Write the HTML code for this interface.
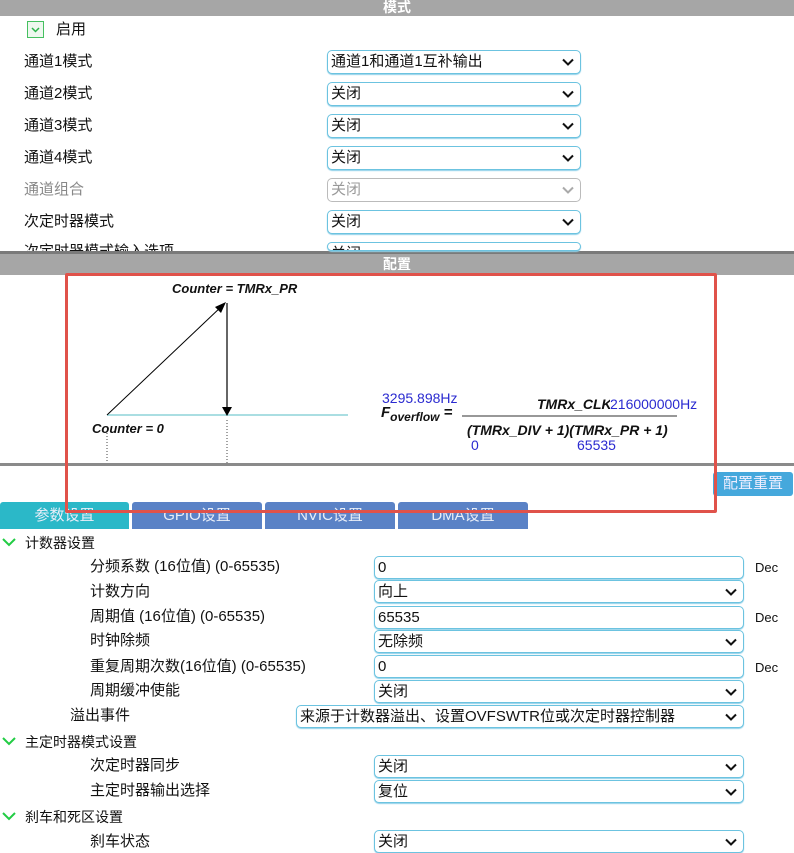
<!DOCTYPE html>
<html><head><meta charset="utf-8"><style>
*{box-sizing:border-box;margin:0;padding:0}
body{width:794px;height:850px;overflow:hidden;background:#fff;position:relative;font-family:"Liberation Sans","Noto Sans CJK SC",sans-serif;color:#111}
.a{position:absolute;white-space:nowrap}
.lab{font-size:15px;line-height:20px}
.sel{position:absolute;border:1px solid #6cc3e0;border-radius:5px;background:#fff;font-size:15px;line-height:22px;padding-left:3px;white-space:nowrap;overflow:hidden;box-shadow:0 1px 1px #8fd0e8}
.sel svg{position:absolute;right:6px;top:7px}
.hdr{position:absolute;left:0;width:794px;background:#a6a6a6;color:#fff;text-align:center;font-size:14px;font-weight:bold}
.tab{position:absolute;top:502px;height:27px;border-radius:3px 3px 0 0;color:#e8eef8;font-size:15px;text-align:center;line-height:27px;background:#5a82c6}
.sec{font-size:14px;line-height:18px}
.chev{position:absolute;left:2px}
.dec{font-size:13px}
.blue{color:#2a2ad0;font-size:13px}
.bi{font-weight:bold;font-style:italic;font-size:13px}
</style></head><body>
<div class="hdr" style="top:0;height:16px;line-height:14px">模式</div>
<div class="a" style="left:27px;top:21px;width:17px;height:17px;border:1px solid #45c060;background:#eef8ef"><svg width="15" height="15" style="position:absolute;left:0;top:0"><path d="M4 6 L7.5 9.5 L11 6" fill="none" stroke="#2bb34a" stroke-width="1.5"/></svg></div>
<div class="a lab" style="left:56px;top:20px">启用</div>

<div class="a lab" style="left:24px;top:52px">通道1模式</div>
<div class="a lab" style="left:24px;top:84px">通道2模式</div>
<div class="a lab" style="left:24px;top:116px">通道3模式</div>
<div class="a lab" style="left:24px;top:148px">通道4模式</div>
<div class="a lab" style="left:24px;top:180px;color:#888">通道组合</div>
<div class="a lab" style="left:24px;top:212px">次定时器模式</div>
<div class="a lab" style="left:24px;top:242px;height:9px;overflow:hidden">次定时器模式输入选项</div>

<div class="a" style="left:0;top:251px;width:794px;height:3px;background:#7a7a7a"></div>
<div class="hdr" style="top:254px;height:21px;line-height:21px">配置</div>

<svg class="a" style="left:0;top:275px" width="794" height="190">
<line x1="107" y1="140" x2="348" y2="140" stroke="#8ed4d8" stroke-width="1.5"/>
<line x1="107" y1="140" x2="222" y2="31" stroke="#000" stroke-width="1"/>
<polygon points="226,27 215,32 221,38" fill="#000"/>
<line x1="227" y1="28" x2="227" y2="134" stroke="#333" stroke-width="1.5"/>
<polygon points="227,141 222,132 232,132" fill="#000"/>
<line x1="107" y1="158" x2="107" y2="190" stroke="#444" stroke-dasharray="1,2"/>
<line x1="227" y1="145" x2="227" y2="190" stroke="#444" stroke-dasharray="1,2"/>
<line x1="462" y1="141" x2="677" y2="141" stroke="#777" stroke-width="1.5"/>
</svg>
<div class="a bi" style="left:172px;top:281px">Counter = TMRx_PR</div>
<div class="a bi" style="left:92px;top:421px">Counter = 0</div>
<div class="a blue" style="left:382px;top:390px;font-size:14px">3295.898Hz</div>
<div class="a bi" style="left:381px;top:404px;font-size:15px">F<sub style="font-size:12px">overflow</sub> =</div>
<div class="a bi" style="left:537px;top:396px;font-size:14px">TMRx_CLK</div>
<div class="a blue" style="left:610px;top:396px;background:#fff;font-size:14px">216000000Hz</div>
<div class="a bi" style="left:467px;top:422px;font-size:14px">(TMRx_DIV + 1)(TMRx_PR + 1)</div>
<div class="a blue" style="left:471px;top:437px;font-size:14px">0</div>
<div class="a blue" style="left:577px;top:437px;font-size:14px">65535</div>

<div class="a" style="left:0;top:463px;width:794px;height:3px;background:#8a8a8a"></div>

<div class="a" style="left:713px;top:472px;width:80px;height:24px;background:#45a8dc;color:#eef;border-radius:3px;font-size:15px;line-height:24px;text-align:center">配置重置</div>

<div class="tab" style="left:0;width:129px;background:#2bb8c8">参数设置</div>
<div class="tab" style="left:132px;width:130px">GPIO设置</div>
<div class="tab" style="left:265px;width:130px">NVIC设置</div>
<div class="tab" style="left:398px;width:130px">DMA设置</div>

<div class="a" style="left:65px;top:273px;width:652px;height:240px;border:3px solid #e0524a;border-radius:2px"></div>

<svg class="chev" style="top:537px" width="16" height="12"><path d="M1 2 L7 8 L13 2" fill="none" stroke="#22cc44" stroke-width="2"/></svg>
<div class="a sec" style="left:25px;top:534px">计数器设置</div>
<svg class="chev" style="top:736px" width="16" height="12"><path d="M1 2 L7 8 L13 2" fill="none" stroke="#22cc44" stroke-width="2"/></svg>
<div class="a sec" style="left:25px;top:733px">主定时器模式设置</div>
<svg class="chev" style="top:811px" width="16" height="12"><path d="M1 2 L7 8 L13 2" fill="none" stroke="#22cc44" stroke-width="2"/></svg>
<div class="a sec" style="left:25px;top:808px">刹车和死区设置</div>

<div class="a lab" style="left:90px;top:557px">分频系数 (16位值) (0-65535)</div>
<div class="a lab" style="left:90px;top:582px">计数方向</div>
<div class="a lab" style="left:90px;top:607px">周期值 (16位值) (0-65535)</div>
<div class="a lab" style="left:90px;top:631px">时钟除频</div>
<div class="a lab" style="left:90px;top:657px">重复周期次数(16位值) (0-65535)</div>
<div class="a lab" style="left:90px;top:681px">周期缓冲使能</div>
<div class="a lab" style="left:70px;top:706px">溢出事件</div>
<div class="a lab" style="left:90px;top:756px">次定时器同步</div>
<div class="a lab" style="left:90px;top:781px">主定时器输出选择</div>
<div class="a lab" style="left:90px;top:832px">刹车状态</div>

<div class="a dec" style="left:755px;top:560px">Dec</div>
<div class="a dec" style="left:755px;top:610px">Dec</div>
<div class="a dec" style="left:755px;top:660px">Dec</div>

<script>
var ch='<svg width="12" height="9"><path d="M1 1.5 L6 6.5 L11 1.5" fill="none" stroke="#111" stroke-width="2"/></svg>';
function s(x,y,w,h,t,arrow,gray){var d=document.createElement('div');d.className='sel';d.style.cssText='left:'+x+'px;top:'+y+'px;width:'+w+'px;height:'+h+'px;'+(gray?'color:#999;border-color:#bbb;box-shadow:none;':'');d.innerHTML=t+(arrow?ch.replace('#111',gray?'#aaa':'#111'):'');document.body.appendChild(d);}
var tops=[50,82,114,146,178,210,242];var txt=['通道1和通道1互补输出','关闭','关闭','关闭','关闭','关闭','关闭'];
for(var i=0;i<7;i++)s(327,tops[i],254,i==6?9:24,txt[i],i<6,i==4);
var b=[[556,'0',0],[580,'向上',1],[606,'65535',0],[630,'无除频',1],[655,'0',0],[680,'关闭',1],[755,'关闭',1],[780,'复位',1],[830,'关闭',1]];
b.forEach(function(r){s(374,r[0],370,23,r[1],r[2]);});
s(296,705,448,23,'来源于计数器溢出、设置OVFSWTR位或次定时器控制器',1);
</script>
</body></html>
